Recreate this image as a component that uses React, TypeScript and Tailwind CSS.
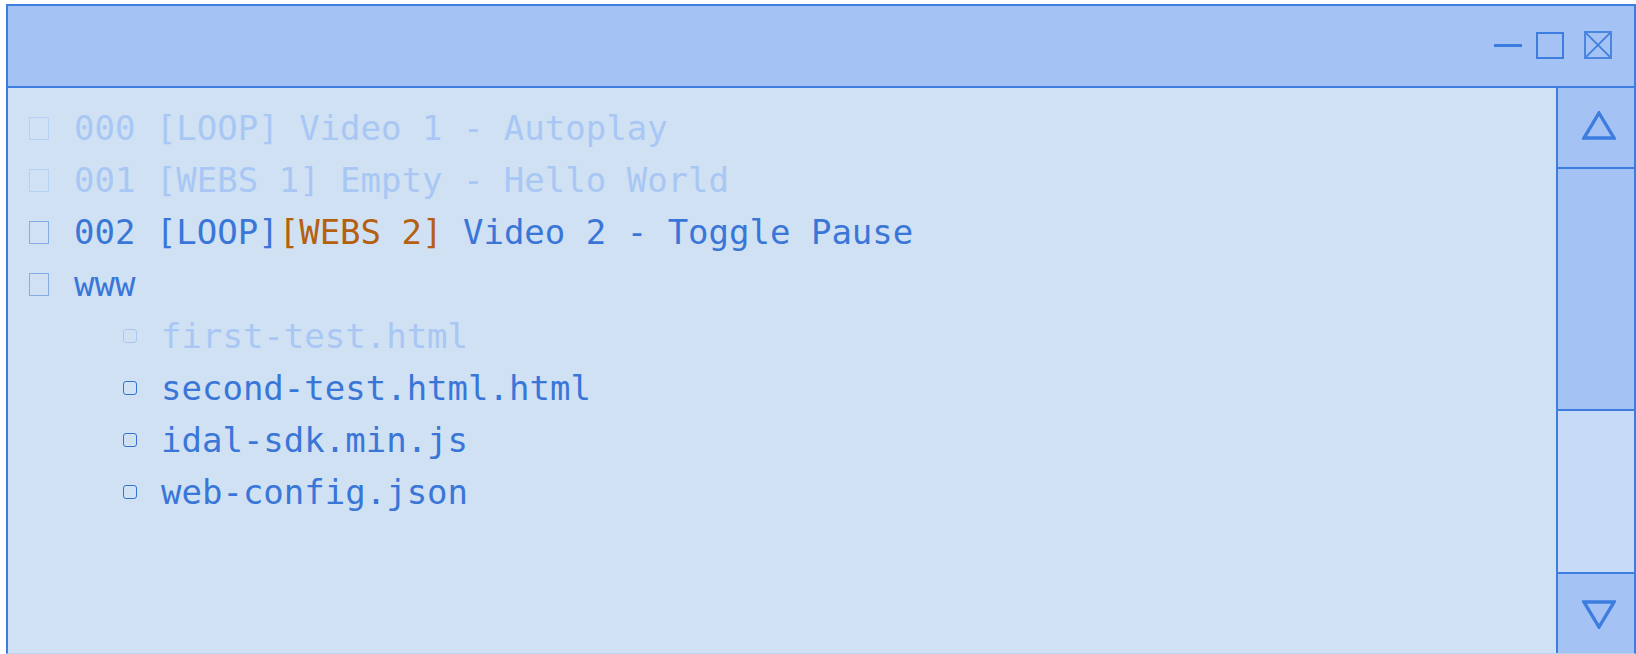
import React from "react";

type Part = { text: string; tone?: "tag" };

type Row = {
  id: string;
  parts: Part[];
  dim?: boolean;
  child?: boolean;
};

const rows: Row[] = [
  { id: "000", parts: [{ text: "000 [LOOP] Video 1 - Autoplay" }], dim: true },
  { id: "001", parts: [{ text: "001 [WEBS 1] Empty - Hello World" }], dim: true },
  {
    id: "002",
    parts: [
      { text: "002 [LOOP]" },
      { text: "[WEBS 2]", tone: "tag" },
      { text: " Video 2 - Toggle Pause" },
    ],
  },
  { id: "www", parts: [{ text: "www" }] },
  { id: "first", parts: [{ text: "first-test.html" }], dim: true, child: true },
  { id: "second", parts: [{ text: "second-test.html.html" }], child: true },
  { id: "sdk", parts: [{ text: "idal-sdk.min.js" }], child: true },
  { id: "config", parts: [{ text: "web-config.json" }], child: true },
];

function Triangle({ down = false }: { down?: boolean }) {
  return (
    <svg width="34" height="30" viewBox="0 0 34 30" className="ml-[6px]">
      <polygon
        points={down ? "2,3 32,3 17,28" : "17,2 32,27 2,27"}
        fill="none"
        stroke="#3c7ddf"
        strokeWidth="3.4"
        strokeLinejoin="miter"
      />
    </svg>
  );
}

function TreeRow({ row }: { row: Row }) {
  const textColor = row.dim ? "text-[#a9c7f4]" : "text-[#3a76d8]";
  return (
    <div className="flex h-[52px] items-center">
      {row.child ? (
        <span
          className={`ml-[115px] mr-[24px] h-[14px] w-[14px] shrink-0 rounded-[3px] border-[1.5px] ${
            row.dim ? "border-[#a9c7f4]" : "border-[#3670d2]"
          }`}
        />
      ) : (
        <span
          className={`ml-[21px] mr-[25px] h-[23px] w-[20px] shrink-0 border ${
            row.dim ? "border-[#b7d0f3]" : "border-[#86ace8]"
          }`}
        />
      )}
      <span className={`whitespace-pre ${textColor}`}>
        {row.parts.map((p, i) => (
          <span key={i} className={p.tone === "tag" ? "text-[#b5600f]" : ""}>
            {p.text}
          </span>
        ))}
      </span>
    </div>
  );
}

export default function App() {
  return (
    <div className="h-[654px] w-[1636px] overflow-hidden bg-white pl-[6px] pt-[4px]">
      <div className="flex h-[650px] w-[1630px] flex-col border-2 border-b border-[#3c7ddf] border-b-[#bcd3f0] bg-[#cfe1f3]">
        {/* title bar */}
        <div className="flex h-[82px] shrink-0 items-center justify-end border-b-2 border-[#3c7ddf] bg-[#a4c3f4] pb-[2px] pr-[22px]">
          <span className="mr-[14px] h-[3px] w-[28px] bg-[#3c7ddf]" />
          <span className="mr-[20px] h-[27px] w-[28px] border-2 border-[#3c7ddf]" />
          <span className="h-[28px] w-[28px] border-2 border-[#4a85e0]">
            <svg width="24" height="24" viewBox="0 0 24 24" className="block">
              <path d="M0 0 L24 24 M24 0 L0 24" stroke="#3c7ddf" strokeWidth="1.6" />
            </svg>
          </span>
        </div>

        <div className="flex min-h-0 flex-1">
          {/* tree */}
          <div className="flex-1 pt-[14px] font-['DejaVu_Sans_Mono',monospace] text-[34px] leading-[52px]">
            {rows.map((row) => (
              <TreeRow key={row.id} row={row} />
            ))}
          </div>

          {/* scrollbar */}
          <div className="flex w-[78px] shrink-0 flex-col border-l-2 border-[#3c7ddf]">
            <div className="flex h-[81px] items-center justify-center border-b-2 border-[#3c7ddf] bg-[#a4c3f4] pb-[3px]">
              <Triangle />
            </div>
            <div className="h-[242px] border-b-2 border-[#3c7ddf] bg-[#a4c3f4]" />
            <div className="flex-1 bg-[#c7dbf7]" />
            <div className="flex h-[81px] items-center justify-center border-t-2 border-[#3c7ddf] bg-[#a4c3f4]">
              <Triangle down />
            </div>
          </div>
        </div>
      </div>
    </div>
  );
}
